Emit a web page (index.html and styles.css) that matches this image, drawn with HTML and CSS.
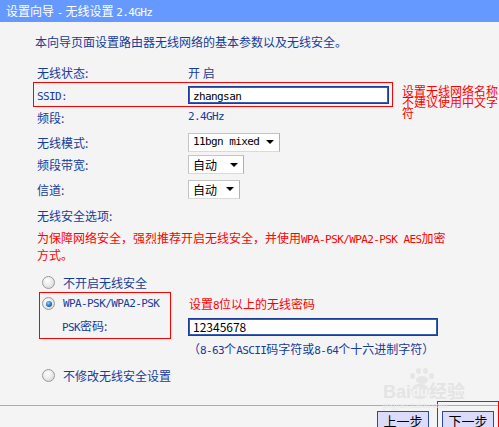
FILE: index.html
```html
<!DOCTYPE html>
<html lang="zh-CN">
<head>
<meta charset="utf-8">
<title>设置向导 - 无线设置 2.4GHz</title>
<link rel="stylesheet" href="styles.css">
</head>
<body>
<div class="page">
  <div class="header">设置向导 <span class="en">-</span> 无线设置 <span class="en">2.4GHz</span></div>
  <div class="content">
    <div class="intro">本向导页面设置路由器无线网络的基本参数以及无线安全。</div>

    <div class="row r-status"><span class="label">无线状态:</span><span class="value">开 启</span></div>

    <div class="ssid-wrap">
      <div class="ssid-box">
        <span class="label"><span class="en">SSID:</span></span>
        <div class="input ssid-input"><span class="en">zhangsan</span></div>
      </div>
      <div class="note note-ssid">设置无线网络名称不建议使用中文字符</div>
    </div>

    <div class="row r-band"><span class="label">频段:</span><span class="value en">2.4GHz</span></div>

    <div class="row r-mode"><span class="label">无线模式:</span>
      <div class="select s-mode"><span class="en">11bgn mixed</span><span class="arrow"></span></div>
    </div>
    <div class="row r-bw"><span class="label">频段带宽:</span>
      <div class="select s-bw"><span>自动</span><span class="arrow"></span></div>
    </div>
    <div class="row r-ch"><span class="label">信道:</span>
      <div class="select s-ch"><span>自动</span><span class="arrow"></span></div>
    </div>

    <div class="row r-sec"><span class="label">无线安全选项:</span></div>

    <div class="warning">为保障网络安全，强烈推荐开启无线安全，并使用<span class="en">WPA-PSK/WPA2-PSK AES</span>加密<br>方式。</div>

    <div class="radio-row r-off"><span class="radio"></span><span class="rtext">不开启无线安全</span></div>

    <div class="wpa-section">
      <div class="wpa-box">
        <div class="radio-row r-wpa"><span class="radio checked"></span><span class="rtext en">WPA-PSK/WPA2-PSK</span></div>
        <div class="psk-label"><span class="en">PSK</span>密码:</div>
      </div>
      <div class="wpa-right">
        <div class="note note-psk">设置<span class="en">8</span>位以上的无线密码</div>
        <div class="input psk-input">12345678</div>
        <div class="hint">（<span class="en">8-63</span>个<span class="en">ASCII</span>码字符或<span class="en">8-64</span>个十六进制字符）</div>
      </div>
    </div>

    <div class="radio-row r-keep"><span class="radio"></span><span class="rtext">不修改无线安全设置</span></div>
  </div>

  <div class="divider"></div>
  <div class="buttons">
    <div class="btn">上一步</div>
    <div class="btn">下一步</div>
  </div>

  <div class="mark-next"></div>
  <div class="watermark">
    <div class="paw"><i></i><i></i><i></i><i></i><b></b></div>
    <div class="wm-text">Bai<span class="du">du</span>经验</div>
    <div class="wm-url">jingyan.baidu.com</div>
  </div>
</div>
</body>
</html>
```

FILE: styles.css
```css
* { box-sizing: border-box; }
html, body { margin: 0; padding: 0; }
body {
  background: #f4f4f4;
  font-family: "Noto Sans CJK SC", "DejaVu Sans", sans-serif;
  font-size: 12px;
  color: #163c9c;
}
.page {
  position: relative;
  width: 499px;
  height: 427px;
  overflow: hidden;
  background: #f4f4f4;
}
.en {
  font-family: "DejaVu Sans Mono", "Liberation Mono", monospace;
  font-size: 11px;
  letter-spacing: -0.6px;
  line-height: 10px;
}
.header {
  height: 22px;
  line-height: 21px;
  background: #6699ff;
  color: #fff;
  font-size: 12px;
  padding-left: 6px;
  white-space: nowrap;
}
.content { padding-left: 37px; }
.intro {
  margin-left: -2px;
  margin-top: 10px;
  height: 20px;
  line-height: 20px;
  color: #163c9c;
}
.row {
  display: flex;
  align-items: center;
  height: 20px;
}
.label {
  width: 151px;
  flex: none;
  white-space: nowrap;
}
.value { color: #163c9c; }
.r-status { margin-top: 10px; }

.ssid-wrap {
  display: flex;
  align-items: flex-start;
  margin-left: -4px;
  height: 25px;
}
.ssid-box {
  width: 360px;
  height: 25px;
  border: 1px solid #ff0000;
  display: flex;
  align-items: center;
  padding-left: 3px;
}
.input {
  background: #fff;
  border: 1px solid #1c3c9c;
  box-shadow: inset 0 0 0 1px #3b5cb4;
  height: 18px;
  line-height: 15px;
  color: #000;
  padding-left: 4px;
  white-space: nowrap;
}
.ssid-input { width: 201px; }
.note {
  color: #ff0000;
  white-space: normal;
}
.note-ssid {
  margin-left: 9px;
  margin-top: 3px;
  width: 97px;
  flex: none;
  line-height: 11px;
}

.r-mode { margin-top: 5px; }
.r-bw { margin-top: 3px; height: 19px; }
.r-ch { margin-top: 5px; }
.r-sec { margin-top: 6px; }

.select {
  height: 19px;
  background: #fff;
  border: 1px solid #c4c4c4;
  border-right-color: #b0b0b0;
  border-bottom-color: #dadada;
  display: flex;
  align-items: center;
  justify-content: space-between;
  padding: 0 4px 0 4px;
  color: #000;
  white-space: nowrap;
}
.s-mode { width: 92px; }
.s-bw { width: 56px; }
.s-ch { width: 52px; }
.arrow {
  width: 0;
  height: 0;
  border-left: 4px solid transparent;
  border-right: 4px solid transparent;
  border-top: 4px solid #000;
  margin-right: 1px;
}

.warning {
  margin-top: 4px;
  height: 34px;
  line-height: 17px;
  color: #ff0000;
  white-space: nowrap;
}

.radio-row {
  display: flex;
  align-items: center;
  height: 20px;
  padding-left: 5px;
}
.r-off { margin-top: 9px; }
.radio {
  width: 13px;
  height: 13px;
  border-radius: 50%;
  border: 1px solid #9a9a9a;
  background: radial-gradient(circle at 40% 35%, #ffffff 0, #ececec 45%, #cfcfcf 100%);
  flex: none;
  margin-right: 8px;
  position: relative;
}
.radio.checked::after {
  content: "";
  position: absolute;
  left: 2.5px;
  top: 2.5px;
  width: 6px;
  height: 6px;
  border-radius: 50%;
  background: radial-gradient(circle at 40% 35%, #8fd0ff 0, #2a78c0 50%, #0b3f7a 100%);
}
.rtext { white-space: nowrap; }

.wpa-section {
  display: flex;
  align-items: flex-start;
  margin-left: 2px;
  height: 65px;
}
.wpa-box {
  width: 132px;
  height: 47px;
  border: 1px solid #ff0000;
  flex: none;
}
.wpa-box .radio-row {
  padding-left: 2px;
  height: 21px;
}
.psk-label {
  height: 24px;
  line-height: 24px;
  padding-left: 22px;
  white-space: nowrap;
}
.wpa-right {
  margin-left: 17px;
  display: flex;
  flex-direction: column;
}
.note-psk {
  height: 24px;
  line-height: 24px;
  margin-left: 1px;
  white-space: nowrap;
}
.psk-input {
  margin-top: 2px;
  width: 250px;
}
.hint {
  margin-top: 5px;
  height: 16px;
  line-height: 16px;
  white-space: nowrap;
}
.r-keep { margin-top: 8px; }

.divider {
  margin-top: 20px;
  height: 1px;
  background: #ff9933;
}
.buttons {
  display: flex;
  justify-content: flex-end;
  gap: 13px;
  padding-right: 5px;
  margin-top: 5px;
}
.btn {
  width: 52px;
  height: 16px;
  border: 1px solid #2a4aa8;
  border-bottom: none;
  background: #dcdcfa;
  color: #000;
  font-size: 13px;
  line-height: 15px;
  padding-top: 1px;
  text-align: center;
}

.mark-next {
  position: absolute;
  left: 437px;
  top: 401px;
  width: 62px;
  height: 40px;
  border: 1px solid #ff0000;
}

.watermark {
  position: absolute;
  left: 383px;
  top: 368px;
  width: 90px;
  color: #e2e2e2;
  pointer-events: none;
}
.paw {
  position: relative;
  height: 15px;
  margin-left: 27px;
}
.paw i {
  position: absolute;
  width: 5px;
  height: 6px;
  border-radius: 50%;
  background: #e6e6e6;
}
.paw i:nth-child(1) { left: 0; top: 5px; }
.paw i:nth-child(2) { left: 6px; top: 0; }
.paw i:nth-child(3) { left: 13px; top: 0; }
.paw i:nth-child(4) { left: 19px; top: 5px; }
.paw b {
  position: absolute;
  left: 6px;
  top: 8px;
  width: 12px;
  height: 8px;
  border-radius: 50%;
  background: #e6e6e6;
}
.wm-text {
  font-family: "Liberation Sans", "Noto Sans CJK SC", sans-serif;
  font-size: 18px;
  font-weight: bold;
  line-height: 18px;
  white-space: nowrap;
  color: #e4e4e4;
}
.du {
  display: inline-block;
  background: #e6e6e6;
  color: #f4f4f4;
  border-radius: 8px;
  font-size: 13px;
  line-height: 15px;
  padding: 0 1px;
  vertical-align: 2px;
}
.wm-url {
  font-family: "Liberation Sans", sans-serif;
  font-size: 8px;
  line-height: 8px;
  margin-top: 1px;
  color: #e8e8e8;
  white-space: nowrap;
}
```
